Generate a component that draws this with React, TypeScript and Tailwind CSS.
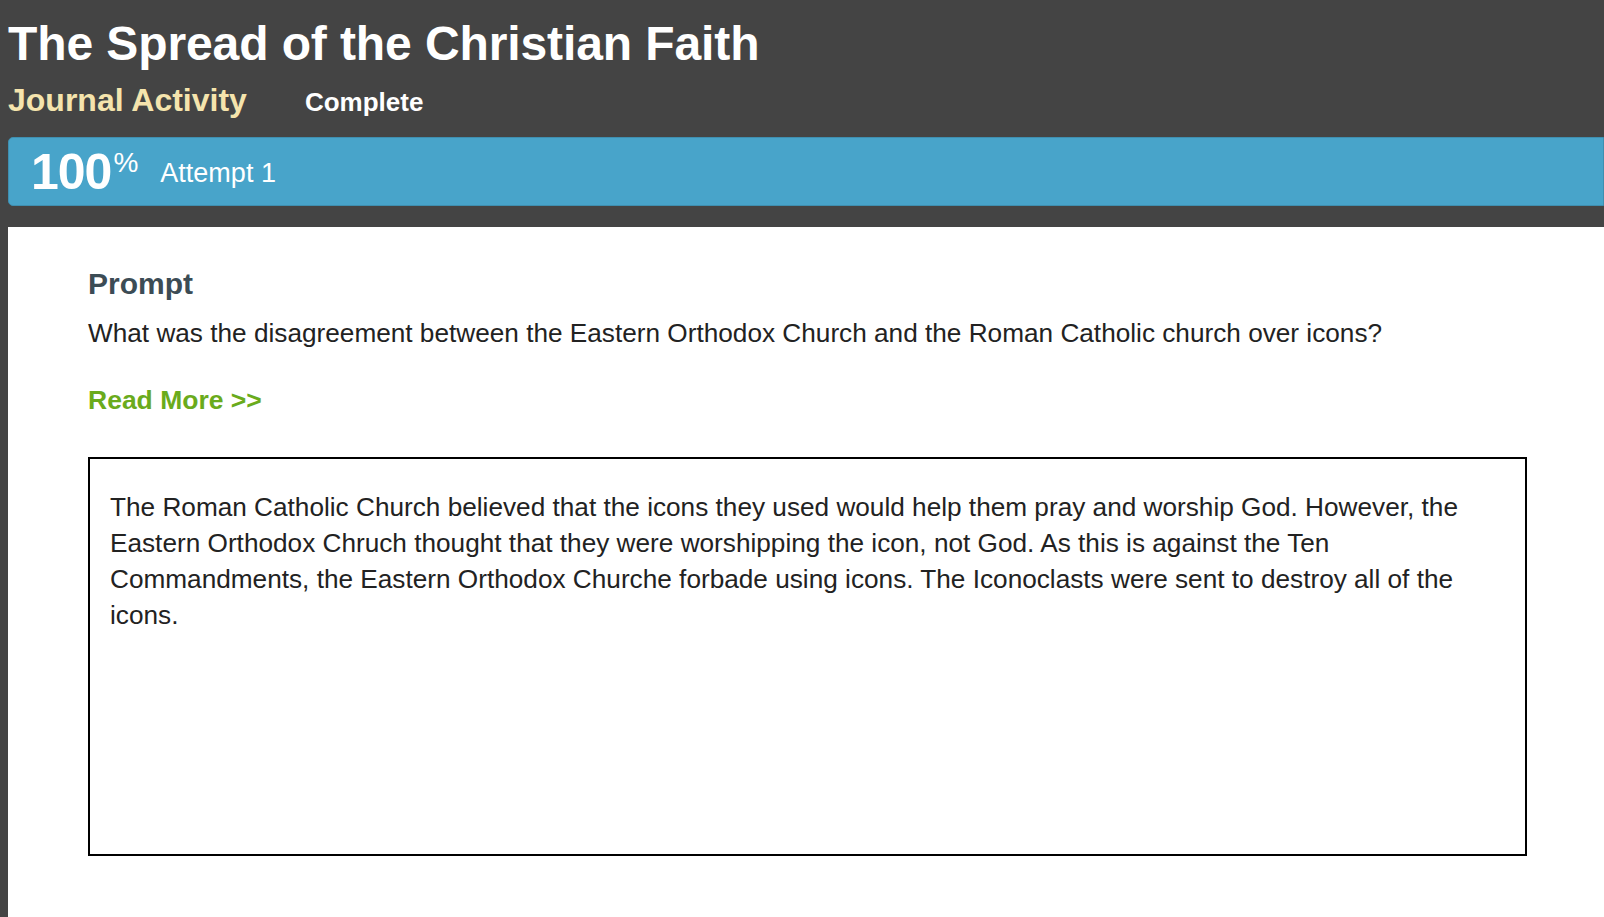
import React from 'react'

const font = { fontFamily: '"Liberation Sans", Arial, Helvetica, sans-serif' }

export default function App() {
  return (
    <div className="min-h-screen bg-[#444444] flex flex-col" style={font}>
      {/* header */}
      <header className="pl-2 pt-[16px]">
        <h1 className="text-[48px] leading-[56px] font-bold text-white tracking-[-0.1px]">
          The Spread of the Christian Faith
        </h1>
        <div className="flex items-baseline mt-[4px] h-[40px]">
          <span className="text-[32px] font-bold text-[#f5e4ad]">Journal Activity</span>
          <span className="ml-[58px] text-[26px] font-bold text-white">Complete</span>
        </div>
        <div className="mt-[21px] h-[69px] bg-[#48a4ca] border border-[#3f8fb0] rounded-l-[5px] flex items-center pl-[22px]">
          <span className="text-[50px] font-bold text-white leading-none tracking-[-1px]">100</span>
          <span className="text-[28px] text-white leading-none self-start mt-[11px] ml-[2px]">%</span>
          <span className="ml-[22px] text-[27px] text-white mt-[4px]">Attempt 1</span>
        </div>
      </header>

      {/* content */}
      <main className="flex-1 ml-2 mt-[21px] bg-white pl-[80px] pr-[77px] pt-[37px]">
        <h2 className="text-[30px] font-bold text-[#3c4c55] leading-[40px]">Prompt</h2>
        <p className="mt-[12px] text-[26.2px] text-[#222222] leading-[34px]">
          What was the disagreement between the Eastern Orthodox Church and the Roman Catholic church over icons?
        </p>
        <a className="block mt-[34px] text-[26.5px] font-bold text-[#6aab1c] leading-[32px]">Read More &gt;&gt;</a>
        <div className="mt-[41px] h-[399px] border-2 border-black px-[20px] pt-[30px] text-[26.2px] leading-[36px] text-[#222222]">
          The Roman Catholic Church believed that the icons they used would help them pray and worship God. However, the Eastern Orthodox Chruch thought that they were worshipping the icon, not God. As this is against the Ten Commandments, the Eastern Orthodox Churche forbade using icons. The Iconoclasts were sent to destroy all of the icons.
        </div>
      </main>
    </div>
  )
}
